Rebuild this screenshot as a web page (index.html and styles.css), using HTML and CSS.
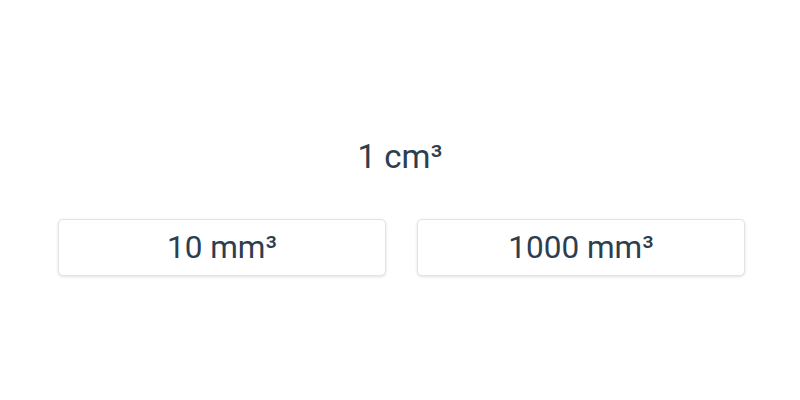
FILE: index.html
```html
<!DOCTYPE html>
<html lang="en">

<head>
    <meta charset="UTF-8">
    <meta name="viewport" content="width=device-width, initial-scale=1.0">
    <title>Volume quiz</title>
    <link rel="stylesheet" href="styles.css">
</head>

<body>
    <div class="quiz">
        <div class="question">1 cm³</div>
        <div class="answers">
            <button class="answer">10 mm³</button>
            <button class="answer">1000 mm³</button>
        </div>
    </div>
</body>

</html>
```

FILE: styles.css
```css
html,
body {
    width: 100%;
    height: 100%;
    margin: 0;
}

body {
    background: #fff;
    font-family: Roboto, "Noto Sans", sans-serif;
    color: #2c3e50;
}

.quiz {
    display: flex;
    flex-direction: column;
    align-items: center;
    padding-top: 137px;
}

.question {
    font-size: 33px;
    line-height: 40px;
    margin-bottom: 42px;
}

.answers {
    display: flex;
    gap: 31px;
    width: 687px;
    margin-left: 3px;
}

.answer {
    flex: 1;
    height: 57px;
    border: 1px solid #e3e3e3;
    border-radius: 5px;
    background: #fff;
    box-shadow: 0 1px 3px rgba(0, 0, 0, 0.12);
    font-family: inherit;
    font-size: 31.5px;
    color: #2c3e50;
    padding: 0;
}
```
